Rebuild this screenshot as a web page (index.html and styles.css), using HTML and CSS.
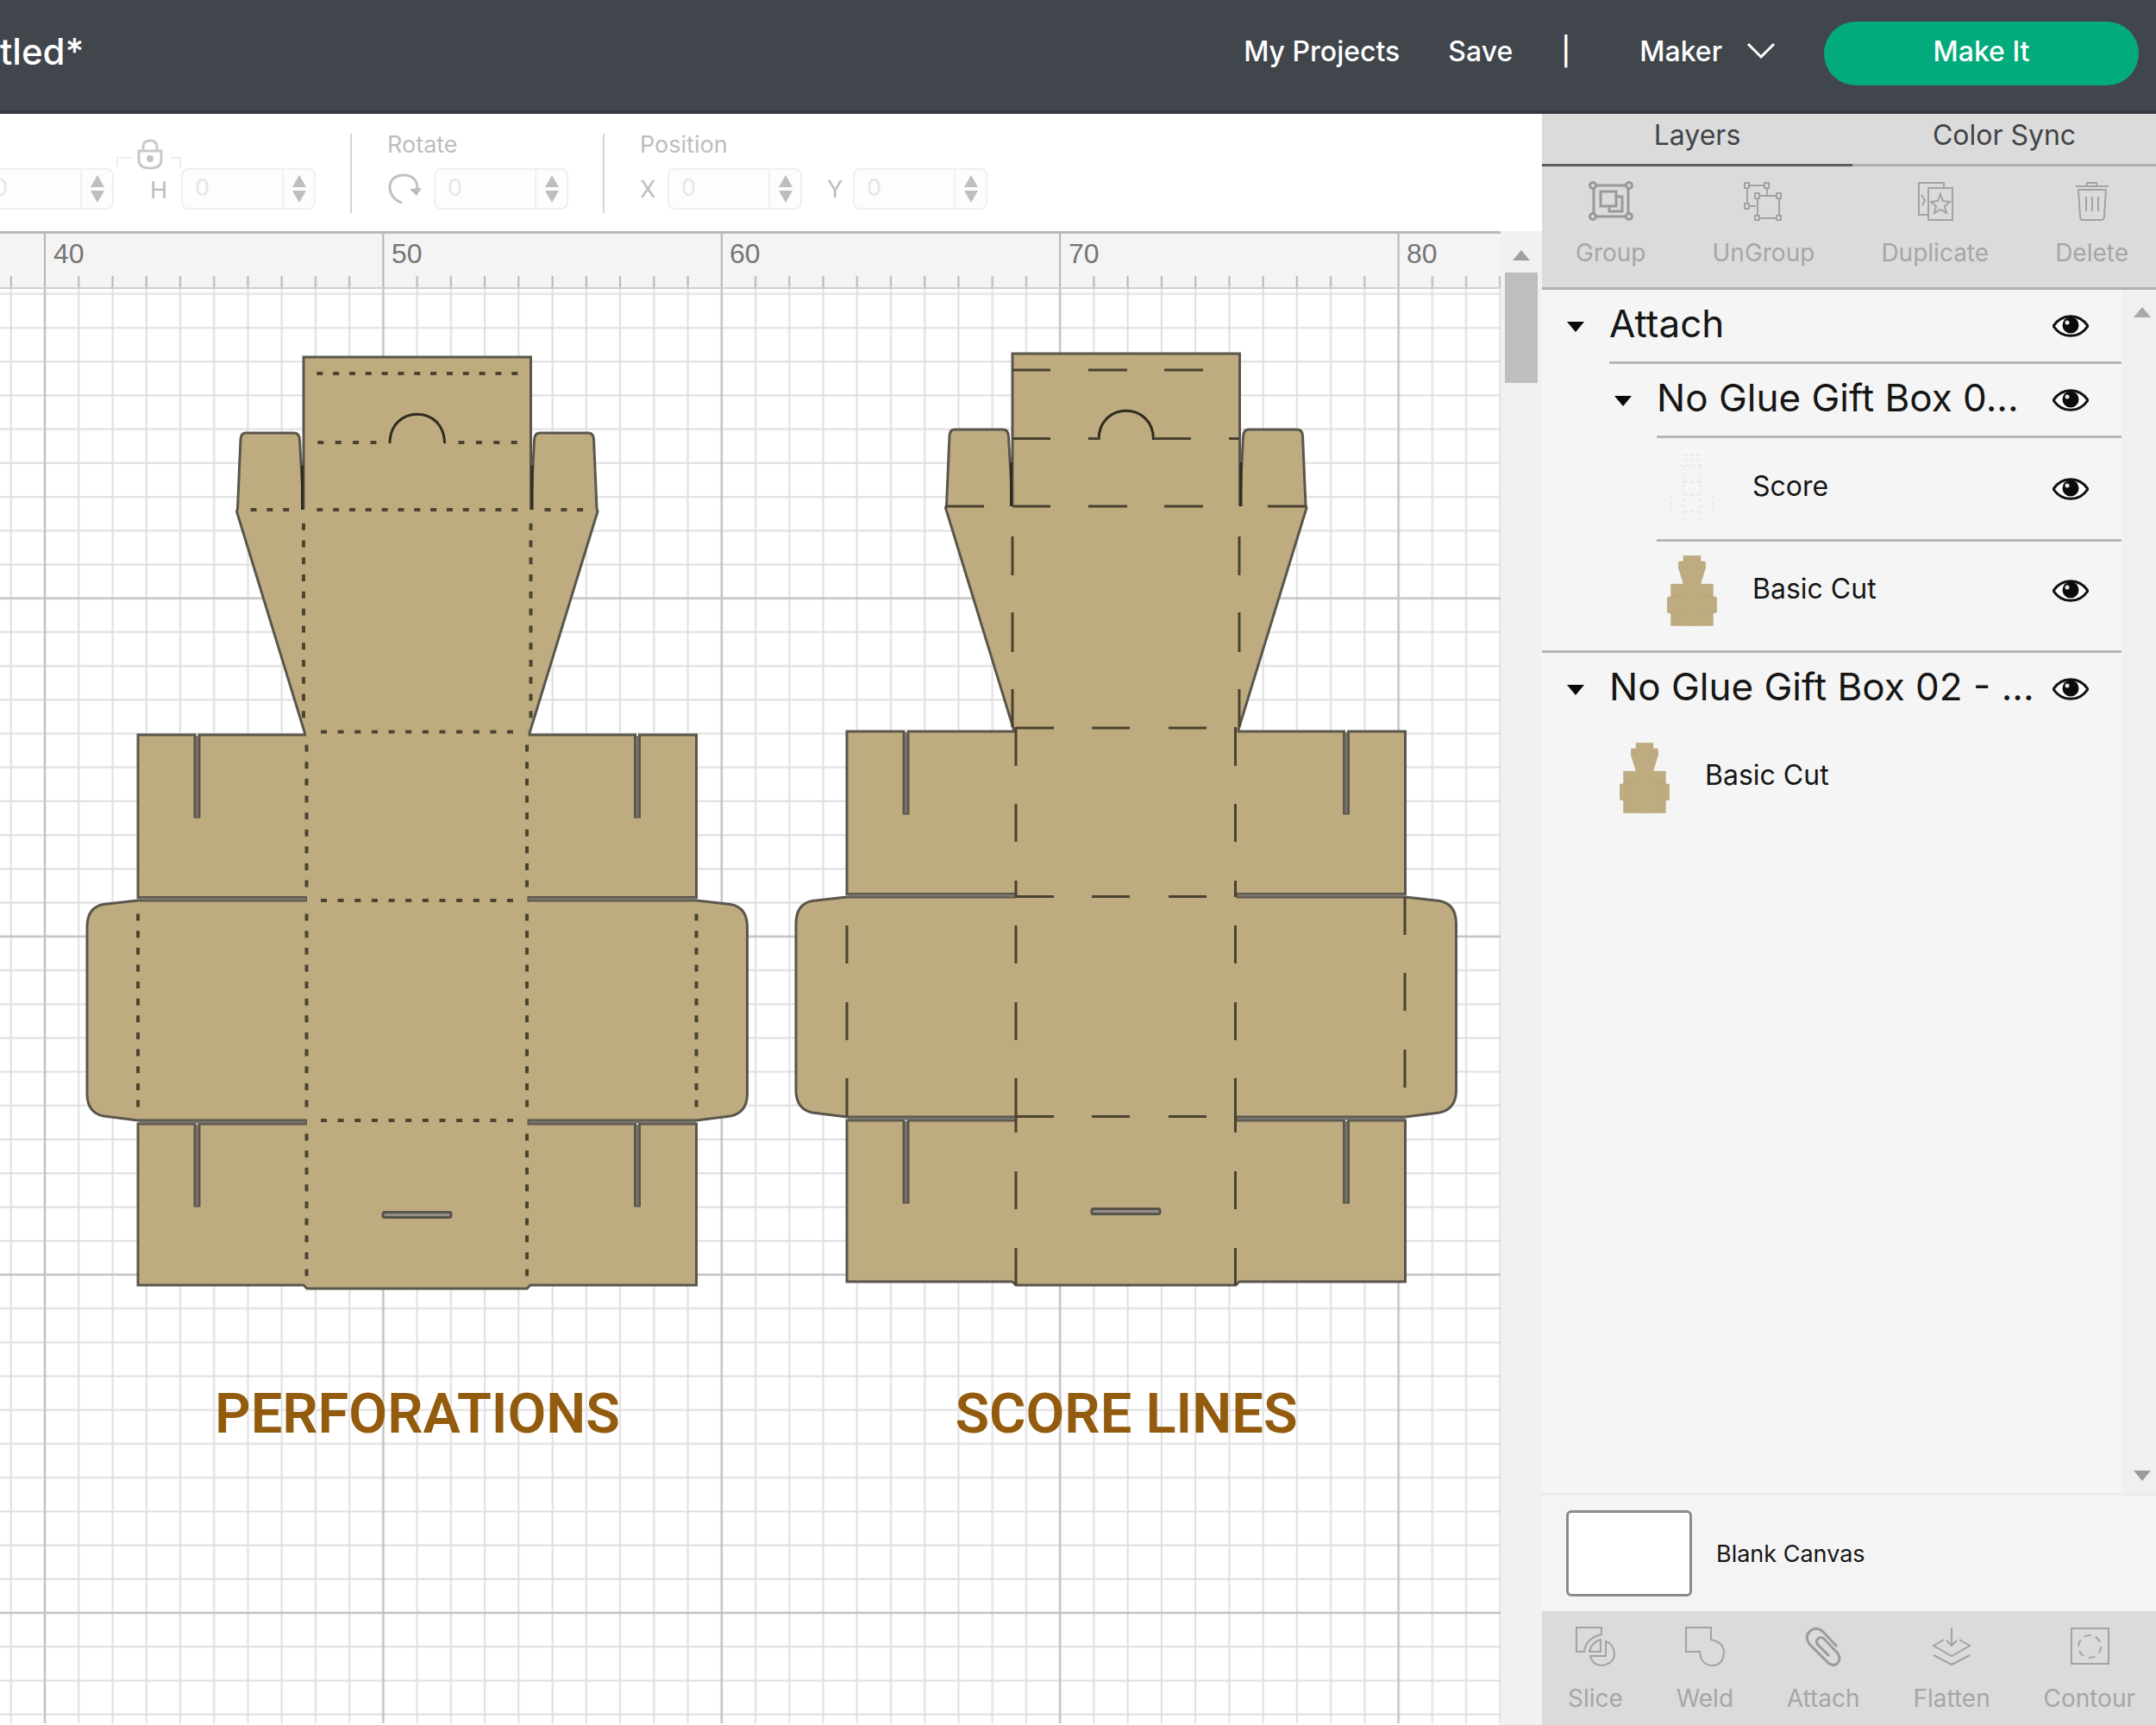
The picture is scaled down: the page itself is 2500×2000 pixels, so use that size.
FILE: index.html
```
<!DOCTYPE html>
<html lang="en">
<head>
<meta charset="utf-8">
<meta name="viewport" content="width=device-width, initial-scale=1">
<title>Untitled*</title>
<link rel="stylesheet" href="styles.css">
</head>
<body>

<svg class="defs" aria-hidden="true">
  <defs>
    <path id="box-body" d="M352 414H615.500V591L619.500 510Q620 502 626 502H682Q688 502 688.500 509L692 590 693 593 614 850V852H736.500V947H741.500V852H807.500V1040.500H613V1044H807.500L847 1048.500Q866.500 1052 866.500 1075V1268Q866.500 1290 847 1294L807.500 1299H613V1303H736.500V1398H741.500V1303H807.500V1490H615L611 1494H356L352 1490H160V1303H226V1398H231V1303H354.500V1299H160L120 1294Q101 1290 101 1268V1075Q101 1052 120 1048.500L160 1044H354.500V1040.500H160V852H226V947H231V852H353.500V850L274.500 593 275.500 590 279 509Q279.500 502 285 502H341Q347 502 347.500 510L352 591Z"/>
    <g id="box-cuts">
      <path class="gap" d="M228.500 853V947M739 853V947M228.500 1304V1398M739 1304V1398M161 1042.200H355M613 1042.200H807M161 1301H355M613 1301H807"/>
      <path class="notch" d="M452 514C452 469 515.500 469 515.500 514"/>
      <path class="notch" d="M350.500 540V591M617 540V591"/>
      <rect class="slit" x="444" y="1405.500" width="79" height="6" rx="2"/>
    </g>
    <g id="eye">
      <path d="M1 13C11-2 31-2 41 13 31 28 11 28 1 13Z" fill="#fff" stroke="#111" stroke-width="3"/>
      <circle cx="21" cy="12" r="9.500" fill="#0b0b0b"/>
      <circle cx="17" cy="9" r="2.500" fill="#e8e8e8"/>
    </g>
  </defs>
</svg>

<header class="topbar">
  <h1 class="topbar-title">tled*</h1>
  <nav class="topbar-nav">
    <a href="#projects">My Projects</a>
    <a href="#save">Save</a>
    <span class="topbar-sep">|</span>
    <button type="button" class="machine">Maker
      <svg width="34" height="20" viewBox="0 0 34 20"><path d="M2 2 17 17 32 2" fill="none" stroke="#fff" stroke-width="3"/></svg>
    </button>
    <button type="button" class="make-it">Make It</button>
  </nav>
</header>

<main class="workspace">
  <section class="editor">
    <div class="toolbar">
      <div class="tool-group tool-size">
        <div class="tool-row">
          <div class="field"><input type="text" value="0" aria-label="W" disabled><button type="button" class="step" aria-label="Step width" disabled><svg width="16" height="34" viewBox="0 0 16 34"><path d="M8 1 16 15H0ZM0 19H16L8 33Z"/></svg></button></div>
          <div class="link-cell">
            <svg width="78" height="36" viewBox="0 0 78 36" fill="none">
              <path d="M4 32V22H20M66 22H77V34" stroke="#ededed" stroke-width="2"/>
              <path d="M34 13V9Q34 2 42 2T50 9V13M29 14H55V24Q55 34 42 34T29 24Z" stroke="#c9c9c9" stroke-width="3"/>
              <circle cx="42" cy="23" r="4" fill="#c4c4c4"/>
            </svg>
            <label for="size-h">H</label>
          </div>
          <div class="field"><input type="text" id="size-h" value="0" disabled><button type="button" class="step" aria-label="Step height" disabled><svg width="16" height="34" viewBox="0 0 16 34"><path d="M8 1 16 15H0ZM0 19H16L8 33Z"/></svg></button></div>
        </div>
      </div>
      <div class="tool-group">
        <span class="tool-name">Rotate</span>
        <div class="tool-row">
          <svg class="rotate" width="40" height="38" viewBox="0 0 40 38"><path d="M17 35C-1 30-3 3 19 3 32 3 37 13 34 22" fill="none" stroke="#c0c0c0" stroke-width="3"/><path d="M26 19 40 18 34 27Z" fill="#bdbdbd"/></svg>
          <div class="field"><input type="text" value="0" aria-label="Rotate" disabled><button type="button" class="step" aria-label="Step rotation" disabled><svg width="16" height="34" viewBox="0 0 16 34"><path d="M8 1 16 15H0ZM0 19H16L8 33Z"/></svg></button></div>
        </div>
      </div>
      <div class="tool-group">
        <span class="tool-name">Position</span>
        <div class="tool-row">
          <label class="axis" for="pos-x">X</label>
          <div class="field"><input type="text" id="pos-x" value="0" disabled><button type="button" class="step" aria-label="Step X" disabled><svg width="16" height="34" viewBox="0 0 16 34"><path d="M8 1 16 15H0ZM0 19H16L8 33Z"/></svg></button></div>
          <label class="axis axis-y" for="pos-y">Y</label>
          <div class="field"><input type="text" id="pos-y" value="0" disabled><button type="button" class="step" aria-label="Step Y" disabled><svg width="16" height="34" viewBox="0 0 16 34"><path d="M8 1 16 15H0ZM0 19H16L8 33Z"/></svg></button></div>
        </div>
      </div>
    </div>

    <div class="canvas-area">
      <div class="canvas">
        <svg class="ruler" width="100%" height="62">
          <defs>
            <pattern id="ticks" x="32" y="0" width="392.400" height="62" patternUnits="userSpaceOnUse">
              <path d="M59.240 49V62M98.480 49V62M137.720 49V62M176.960 49V62M216.200 49V62M255.440 49V62M294.680 49V62M333.920 49V62M373.160 49V62" stroke="#b4b4b4" stroke-width="2"/>
              <path d="M20 0V62" stroke="#b4b4b4" stroke-width="2"/>
            </pattern>
          </defs>
          <rect width="100%" height="62" fill="url(#ticks)"/>
          <text x="62" y="34">40</text><text x="454" y="34">50</text><text x="846" y="34">60</text><text x="1239" y="34">70</text><text x="1631" y="34">80</text>
        </svg>
        <div class="stage">
          <svg class="grid" width="100%" height="100%">
            <defs>
              <pattern id="mat" x="32" y="340.700" width="392.400" height="392.100" patternUnits="userSpaceOnUse">
                <path d="M59.240 0V393M98.480 0V393M137.720 0V393M176.960 0V393M216.200 0V393M255.440 0V393M294.680 0V393M333.920 0V393M373.160 0V393M0 59.210H393M0 98.420H393M0 137.630H393M0 176.840H393M0 216.050H393M0 255.260H393M0 294.470H393M0 333.680H393M0 372.890H393" stroke="#dedede" stroke-width="2"/>
                <path d="M20 0V393M0 20H393" stroke="#c2c2c2" stroke-width="2.500"/>
              </pattern>
            </defs>
            <rect width="100%" height="100%" fill="url(#mat)"/>
          </svg>

          <figure class="shape shape-perforated">
            <svg width="772" height="1090" viewBox="98 407 772 1090">
              <use href="#box-body" class="body"/>
              <use href="#box-cuts"/>
              <g class="perforation">
                <path stroke-dasharray="7 11.830" d="M367.300 433H605M367.300 591H605M290.500 591H337M631.500 591H678"/>
                <path stroke-dasharray="7 13.400" d="M368.300 513H440M531.500 513H601"/>
                <path stroke-dasharray="7 12.640" d="M372 848.500H597M372 1044H597M372 1299H597"/>
                <path stroke-dasharray="8 11.780" d="M352 606.700V834M615.500 606.700V834"/>
                <path stroke-dasharray="8 11.640" d="M355.500 863.500V1030M611 863.500V1030M355.500 1059.500V1285M611 1059.500V1285M160 1059.500V1285M807.500 1059.500V1285M355.500 1314.400V1481M611 1314.400V1481"/>
              </g>
            </svg>
            <figcaption>PERFORATIONS</figcaption>
          </figure>

          <figure class="shape shape-scored">
            <svg width="772" height="1090" viewBox="920 407 772 1090">
              <g transform="translate(822 -4)">
                <use href="#box-body" class="body"/>
                <use href="#box-cuts"/>
              </g>
              <path class="score" d="M1174 429H1218M1262 429H1307M1350 429H1395M1174 508.500H1218M1262 508.500H1274M1338 508.500H1381M1425 508.500H1437M1096 587H1141M1174 587H1218M1262 587H1307M1350 587H1395M1470 587H1515M1178 844H1222M1266 844H1310M1355 844H1399M1178 1039.500H1222M1266 1039.500H1310M1355 1039.500H1399M1178 1294.500H1222M1266 1294.500H1310M1355 1294.500H1399M1174 622V667M1174 710V756M1174 799V843M1437 622V667M1437 710V756M1437 799V843M1178 843V888M1178 932V976M1178 1021V1040M1178 1073V1117M1178 1162V1206M1178 1250V1313M1178 1358V1402M1178 1447V1490M1432.500 843V888M1432.500 932V976M1432.500 1021V1040M1432.500 1073V1117M1432.500 1162V1206M1432.500 1250V1313M1432.500 1358V1402M1432.500 1447V1490M982 1073V1117M982 1162V1206M982 1250V1294M1629 1040V1084M1629 1128V1172M1629 1217V1261"/>
            </svg>
            <figcaption>SCORE LINES</figcaption>
          </figure>
        </div>
      </div>
      <div class="canvas-scroll">
        <svg width="20" height="12" viewBox="0 0 20 12"><path d="M10 0 20 12H0Z" fill="#a0a0a0"/></svg>
        <div class="canvas-thumb"></div>
      </div>
    </div>
  </section>

  <aside class="panel">
    <div class="tabs">
      <button type="button" class="tab tab-active">Layers</button>
      <button type="button" class="tab">Color Sync</button>
    </div>

    <div class="actions actions-top">
      <button type="button" class="action" disabled>
        <svg width="52" height="46" viewBox="0 0 52 46" stroke="#999" stroke-width="3">
          <path d="M6 5H46V41H6Z"/><path d="M24 29V35H39V18H33"/><path d="M14 12H32V29H14Z"/>
          <g fill="#dbdbdb"><circle cx="5" cy="5" r="3.500"/><circle cx="47" cy="5" r="3.500"/><circle cx="5" cy="41" r="3.500"/><circle cx="47" cy="41" r="3.500"/></g>
        </svg>Group</button>
      <button type="button" class="action" disabled>
        <svg width="52" height="46" viewBox="0 0 52 46" stroke="#a3a3a3" stroke-width="2">
          <path d="M7 5H30V17M17 29H7V5"/><path d="M19 17H44V43H19Z"/>
          <path fill="#dbdbdb" d="M4 2H9V8H4ZM27 2H32V8H27ZM4 26H9V32H4ZM16 14H21V20H16ZM41 14H46V20H41ZM16 40H21V45H16ZM41 40H46V45H41Z"/>
        </svg>UnGroup</button>
      <button type="button" class="action" disabled>
        <svg width="52" height="46" viewBox="0 0 52 46" stroke="#a3a3a3" stroke-width="2">
          <path d="M36 7V2H7V39H17M10 16 14 22 11 28"/><path d="M18 8H46V45H18Z"/>
          <path d="M32 15 35 23 43 24 37 29 39 37 32 33 25 37 27 29 21 24 29 23Z"/>
        </svg>Duplicate</button>
      <button type="button" class="action" disabled>
        <svg width="52" height="46" viewBox="0 0 52 46" stroke="#a3a3a3" stroke-width="2">
          <path d="M7 6H45M20 5V2H31V5M10 10H42L40 41Q40 45 36 45H15Q12 45 12 41ZM19 18V35M26 18V35M33 18V35"/>
        </svg>Delete</button>
    </div>

    <div class="layers-wrap">
      <ul class="layers">
        <li class="layer-group layer-group-first">
          <div class="row">
            <button type="button" class="caret" aria-label="Collapse"></button>
            <div class="row-body"><span class="row-title">Attach</span><button type="button" class="eye" aria-label="Hide"><svg width="42" height="26" viewBox="0 0 42 26"><use href="#eye"/></svg></button></div>
          </div>
          <ul class="nested">
            <li>
              <div class="row">
                <button type="button" class="caret" aria-label="Collapse"></button>
                <div class="row-body"><span class="row-title">No Glue Gift Box 0...</span><button type="button" class="eye" aria-label="Hide"><svg width="42" height="26" viewBox="0 0 42 26"><use href="#eye"/></svg></button></div>
              </div>
              <ul>
                <li class="leaf">
                  <svg class="thumb" width="58" height="82" viewBox="98 411 772 1086"><path d="M352 433H615M352 513H615M274 591H693M352 848H615M355 1044H611M355 1299H611M353 591V1494M613 591V1494M160 1044V1299M807 1044V1299" fill="none" stroke="#e4e4e4" stroke-width="18" stroke-dasharray="60 40"/></svg>
                  <span>Score</span><button type="button" class="eye" aria-label="Hide"><svg width="42" height="26" viewBox="0 0 42 26"><use href="#eye"/></svg></button>
                </li>
                <li class="leaf">
                  <svg class="thumb" width="58" height="82" viewBox="98 411 772 1086"><use href="#box-body" class="mini"/></svg>
                  <span>Basic Cut</span><button type="button" class="eye" aria-label="Hide"><svg width="42" height="26" viewBox="0 0 42 26"><use href="#eye"/></svg></button>
                </li>
              </ul>
            </li>
          </ul>
        </li>
        <li class="layer-group">
          <div class="row row-plain">
            <button type="button" class="caret" aria-label="Collapse"></button>
            <div class="row-body"><span class="row-title">No Glue Gift Box 02 - ...</span><button type="button" class="eye" aria-label="Hide"><svg width="42" height="26" viewBox="0 0 42 26"><use href="#eye"/></svg></button></div>
          </div>
          <ul>
            <li class="leaf">
              <svg class="thumb" width="58" height="82" viewBox="98 411 772 1086"><use href="#box-body" class="mini"/></svg>
              <span>Basic Cut</span>
            </li>
          </ul>
        </li>
      </ul>
      <div class="layers-scroll">
        <svg width="20" height="12" viewBox="0 0 20 12"><path d="M10 0 20 12H0Z" fill="#a8a8a8"/></svg>
        <svg width="20" height="12" viewBox="0 0 20 12"><path d="M0 0H20L10 12Z" fill="#9a9a9a"/></svg>
      </div>
    </div>

    <div class="blank">
      <button type="button" class="swatch" aria-label="Canvas colour"></button>
      <span>Blank Canvas</span>
    </div>

    <div class="actions actions-bottom">
      <button type="button" class="action" disabled>
        <svg width="46" height="46" viewBox="0 0 46 46" stroke="#a3a3a3" stroke-width="2">
          <path d="M30 9V1H1V29H10Q12 13 30 9Z"/><path d="M29 15V29H16Q18 18 29 15Z"/><path d="M35 17V34H17Q20 45 30 45 45 43 45 31 44 20 35 17Z"/>
        </svg>Slice</button>
      <button type="button" class="action" disabled>
        <svg width="46" height="46" viewBox="0 0 46 46" stroke="#a3a3a3" stroke-width="2">
          <path d="M1 1H30V15Q45 18 45 30 44 45 31 45 18 44 17 29H1Z"/>
        </svg>Weld</button>
      <button type="button" class="action" disabled>
        <svg width="46" height="46" viewBox="0 0 46 46" stroke="#9c9c9c" stroke-width="3">
          <path d="M39 23 23 6Q15-1 8 5T7 20L29 42Q36 47 40 42T40 31L24 14Q20 11 17 14T17 21L30 34"/>
        </svg>Attach</button>
      <button type="button" class="action" disabled>
        <svg width="46" height="46" viewBox="0 0 46 46" stroke="#a3a3a3" stroke-width="2">
          <path d="M23 1V22M17 16 23 22 29 16M14 15 2 22 23 34 44 22 32 15M2 33 23 44 44 33"/>
        </svg>Flatten</button>
      <button type="button" class="action" disabled>
        <svg width="46" height="46" viewBox="0 0 46 46" stroke="#a3a3a3" stroke-width="2">
          <path d="M2 2H45V43H2Z"/><circle cx="23" cy="23" r="13" stroke-dasharray="8 5.600"/>
        </svg>Contour</button>
    </div>
  </aside>
</main>
</body>
</html>
```
FILE: styles.css
```
* {
  box-sizing: border-box;
}

body {
  margin: 0;
  min-height: 100vh;
  display: flex;
  flex-direction: column;
  font-family: Inter, "Liberation Sans", sans-serif;
  color: #161616;
  background: #fff;
}

button {
  font: inherit;
  color: inherit;
  background: none;
  border: 0;
  padding: 0;
}

ul {
  list-style: none;
  margin: 0;
  padding: 0;
}

svg {
  display: block;
  flex: none;
}

.defs {
  position: absolute;
  width: 0;
  height: 0;
}

/* Top bar */
.topbar {
  display: flex;
  align-items: center;
  justify-content: space-between;
  height: 132px;
  padding: 0 20px 4px 0;
  background: #41454c;
  border-bottom: 4px solid #373942;
  color: #fff;
  font-size: 32px;
  font-weight: 500;
}

.topbar-title {
  margin: 0;
  padding-bottom: 6px;
  font-size: 42px;
  font-weight: 500;
}

.topbar-nav {
  display: flex;
  align-items: center;
  gap: 56px;
}

.topbar-nav a,
.topbar-sep,
.machine {
  padding-bottom: 6px;
  color: #fff;
  text-decoration: none;
}

.machine {
  display: flex;
  align-items: center;
  gap: 28px;
  padding-left: 24px;
}

.make-it {
  width: 365px;
  height: 74px;
  padding-bottom: 6px;
  border-radius: 37px;
  background: #03aa7b;
}

/* Main split */
.workspace {
  flex: 1;
  display: flex;
}

.editor {
  flex: 1;
  min-width: 0;
  display: flex;
  flex-direction: column;
}

/* Edit toolbar */
.toolbar {
  display: flex;
  height: 136px;
  padding-top: 23px;
  overflow: hidden;
  color: #bdbdbd;
  font-size: 27px;
}

.tool-group {
  display: flex;
  flex-direction: column;
  justify-content: space-between;
  height: 92px;
  padding: 0 40px 4px 41px;
  border-left: 2px solid #d4d4d4;
}

.tool-size {
  justify-content: flex-end;
  margin-left: -26px;
  padding-left: 0;
}

.tool-name {
  line-height: 26px;
}

.tool-row {
  display: flex;
  align-items: center;
}

.tool-size .tool-row {
  align-items: flex-end;
}

.field {
  display: flex;
  width: 156px;
  height: 48px;
  border: 2px solid #f0f0f0;
  border-radius: 8px;
  background: #fdfdfd;
}

.field input {
  flex: 1;
  min-width: 0;
  padding: 0 0 4px 14px;
  border: 0;
  background: none;
  font: inherit;
  color: #e6e6e6;
}

.step {
  width: 37px;
  display: grid;
  place-items: center;
  border-left: 2px solid #f0f0f0;
}

.step path {
  fill: #bebebe;
}

.link-cell {
  width: 78px;
  display: flex;
  flex-direction: column;
  gap: 2px;
  line-height: 44px;
}

.link-cell label {
  padding-left: 42px;
}

.axis {
  width: 32px;
}

.axis-y {
  width: 59px;
  padding-left: 29px;
}

.rotate {
  margin: 0 14px 0 0;
}

/* Design canvas */
.canvas-area {
  flex: 1;
  display: flex;
}

.canvas {
  flex: 1;
  min-width: 0;
  display: flex;
  flex-direction: column;
}

.ruler {
  height: 65px;
  border-top: 3px solid #bababa;
  background: #f4f4f4;
  font-family: "Liberation Sans", sans-serif;
  font-size: 32px;
}

.ruler text {
  fill: #757575;
}

.stage {
  flex: 1;
  position: relative;
  overflow: hidden;
  min-height: 1400px;
  border-top: 2px solid #cfcfcf;
}

.grid {
  position: absolute;
  inset: -2px 0 0;
}

.shape {
  position: absolute;
  top: 72px;
  width: 772px;
  margin: 0;
  text-align: center;
}

.shape-perforated {
  left: 98px;
}

.shape-scored {
  left: 920px;
}

.shape figcaption {
  margin-top: 102px;
  font-family: Roboto, sans-serif;
  font-size: 65px;
  line-height: 80px;
  font-weight: 600;
  color: #935b0d;
}

.body {
  fill: #beac80;
  stroke: #5a564c;
  stroke-width: 3px;
}

.mini {
  fill: #beac80;
  stroke: #b3a074;
  stroke-width: 8px;
}

.gap {
  fill: none;
  stroke: #77736b;
  stroke-width: 3px;
}

.notch {
  fill: none;
  stroke: #2f2b1e;
  stroke-width: 3px;
}

.slit {
  fill: #928d86;
  stroke: #57534a;
  stroke-width: 3px;
}

.perforation {
  fill: none;
  stroke: #4b4431;
  stroke-width: 4px;
}

.score {
  fill: none;
  stroke: #4a4230;
  stroke-width: 3px;
}

.canvas-scroll {
  width: 48px;
  padding-top: 22px;
  display: flex;
  flex-direction: column;
  align-items: center;
  gap: 14px;
  background: #f1f1f1;
}

.canvas-thumb {
  width: 38px;
  height: 128px;
  background: #bebebe;
}

/* Side panel */
.panel {
  width: 712px;
  display: flex;
  flex-direction: column;
  background: #f4f4f4;
}

.tabs {
  display: flex;
  height: 61px;
  background: #dbdbdb;
  font-size: 32px;
  color: #414448;
}

.tab {
  flex: 1;
  padding-bottom: 10px;
  border-bottom: 3px solid #b0b0b0;
}

.tab-active {
  flex: none;
  width: 360px;
  border-color: #5c5c60;
}

.actions {
  display: flex;
  justify-content: space-between;
  background: #dbdbdb;
  color: #a6a6a6;
  font-size: 28px;
  line-height: 34px;
}

.actions-top {
  height: 143px;
  padding: 17px 32px 0 39px;
  border-bottom: 3px solid #b0b0b0;
}

.actions-bottom {
  height: 132px;
  padding: 18px 24px 0 30px;
}

.action {
  display: flex;
  flex-direction: column;
  align-items: center;
  gap: 20px;
  height: 100px;
  color: #a6a6a6;
}

.action svg {
  fill: none;
}

.layers-wrap {
  flex: 1;
  display: flex;
  border-bottom: 3px solid #ebebeb;
}

.layers {
  flex: 1;
  background: #f5f5f5;
}

.layer-group-first {
  padding-bottom: 12px;
  border-bottom: 3px solid #b6b6b6;
}

.row {
  display: flex;
  height: 86px;
}

.caret {
  width: 78px;
  padding-left: 29px;
}

.caret::before {
  content: "";
  display: block;
  border: 10px solid transparent;
  border-top: 12px solid #0a0a0a;
  border-bottom: 0;
  width: 0;
}

.row-body {
  flex: 1;
  display: flex;
  align-items: center;
  justify-content: space-between;
  padding-right: 38px;
  border-bottom: 3px solid #b6b6b6;
}

.row-plain .row-body {
  border-bottom-color: transparent;
}

.row-title {
  padding-bottom: 6px;
  font-size: 44px;
  line-height: 52px;
  white-space: nowrap;
}

.nested {
  margin-left: 55px;
}

.leaf {
  display: flex;
  align-items: center;
  height: 117px;
  margin-left: 78px;
  padding: 0 38px 0 12px;
  font-size: 32px;
}

.leaf + .leaf {
  border-top: 3px solid #b6b6b6;
}

.leaf span {
  flex: 1;
  margin-left: 41px;
  padding-bottom: 6px;
}

.layers-scroll {
  width: 40px;
  padding: 20px 0 14px 14px;
  display: flex;
  flex-direction: column;
  justify-content: space-between;
  background: #f0f0f0;
}

.blank {
  display: flex;
  align-items: center;
  gap: 28px;
  height: 134px;
  padding: 0 28px;
  font-size: 27px;
}

.swatch {
  width: 146px;
  height: 100px;
  border: 3px solid #8b8b8b;
  border-radius: 6px;
  background: #fff;
}
```
